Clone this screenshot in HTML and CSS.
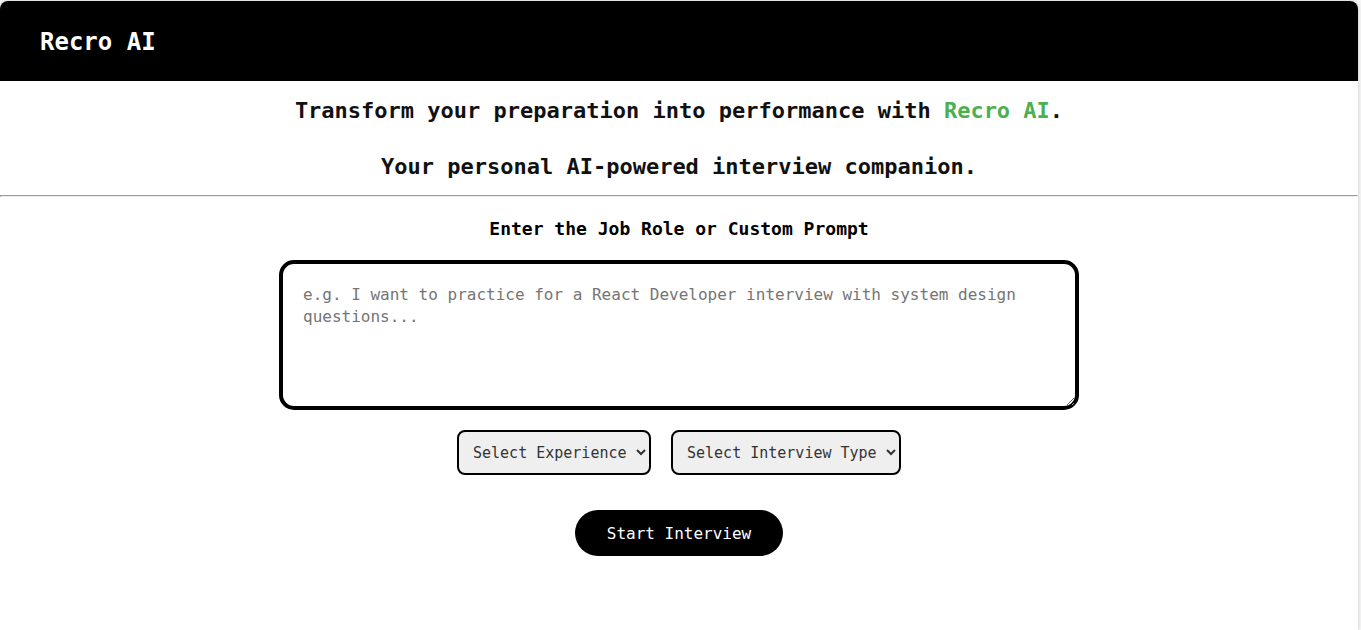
FILE: index.html
```html
<!DOCTYPE html>
<html lang="en">
<head>
<meta charset="utf-8">
<meta name="viewport" content="width=device-width, initial-scale=1">
<title>Recro AI</title>
<link rel="stylesheet" href="styles.css">
</head>
<body>
<div class="page">
  <header class="header">
    <span class="logo">Recro AI</span>
  </header>
  <main>
    <div class="intro">
      <h1 class="headline">Transform your preparation into performance with <span class="brand">Recro AI</span>.</h1>
      <h2 class="headline">Your personal AI-powered interview companion.</h2>
    </div>
    <hr class="divider">
    <form class="setup">
      <label class="prompt-label" for="prompt">Enter the Job Role or Custom Prompt</label>
      <textarea class="prompt" id="prompt" placeholder="e.g. I want to practice for a React Developer interview with system design questions..."></textarea>
      <div class="options">
        <select class="option" aria-label="Experience">
          <option>Select Experience</option>
        </select>
        <select class="option" aria-label="Interview type">
          <option>Select Interview Type</option>
        </select>
      </div>
      <button class="start" type="button">Start Interview</button>
    </form>
  </main>
</div>
</body>
</html>
```
FILE: styles.css
```css
* {
  box-sizing: border-box;
}

body {
  margin: 0;
  padding: 1px 3px 0 0;
  background: #f7f7f7;
}

body,
textarea,
select,
button {
  font-family: Consolas, "DejaVu Sans Mono", monospace;
}

.page {
  min-height: calc(100vh - 1px);
  background: #fff;
  border-radius: 8px 8px 0 0;
  box-shadow: 0 0 4px rgba(0, 0, 0, 0.2);
}

.header {
  display: flex;
  align-items: center;
  height: 80px;
  padding: 2px 40px 0;
  background: #000;
  border-radius: 8px 8px 0 0;
}

.logo {
  color: #fff;
  font-size: 24px;
  font-weight: bold;
}

.intro {
  display: flex;
  flex-direction: column;
  gap: 28px;
  padding: 16px 0 14px;
}

.headline {
  margin: 0;
  color: #111;
  font-size: 22px;
  line-height: 28px;
  text-align: center;
}

.brand {
  color: #4caf50;
}

.divider {
  margin: 0;
  border: 1px solid #eee;
  border-top-color: #9a9a9a;
  border-left-color: #9a9a9a;
}

.setup {
  display: flex;
  flex-direction: column;
  align-items: center;
  padding: 20px;
}

.prompt-label {
  margin-bottom: 19px;
  color: #000;
  font-size: 18px;
  font-weight: bold;
  line-height: 24px;
}

.prompt {
  width: 100%;
  max-width: 800px;
  height: 150px;
  padding: 20px;
  border: 4px solid #000;
  border-radius: 15px;
  background: #fff;
  font-size: 16px;
  line-height: 22px;
}

.prompt::placeholder {
  color: #757575;
}

.options {
  display: flex;
  flex-wrap: wrap;
  justify-content: center;
  gap: 20px;
  margin: 20px 0 35px;
}

.option {
  height: 45px;
  padding: 0 6px 0 10px;
  border: 2px solid #000;
  border-radius: 8px;
  background-color: #efefef;
  color: #333;
  font-size: 15px;
}

.start {
  height: 46px;
  padding: 0 32px;
  border: 0;
  border-radius: 23px;
  background: #000;
  color: #fff;
  font-size: 16px;
}
```
